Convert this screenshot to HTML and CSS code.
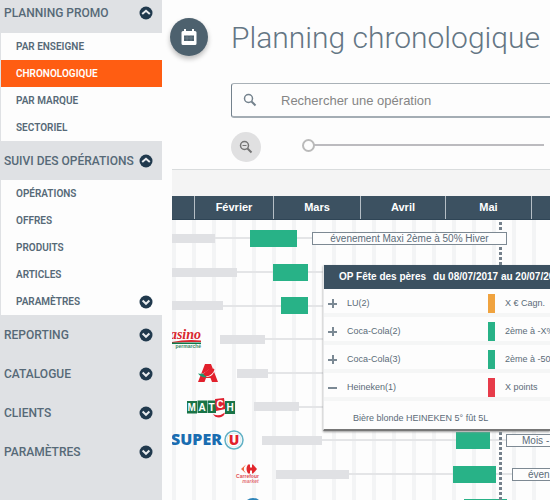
FILE: index.html
```html
<!DOCTYPE html>
<html lang="fr">
<head>
    <meta charset="UTF-8">
    <title>Planning chronologique</title>
    <link rel="stylesheet" href="styles.css">
</head>
<body>
<svg width="0" height="0" class="defs">
    <symbol id="down" viewBox="0 0 14 14">
        <circle cx="7" cy="7" r="6.5" fill="#20394d"/>
        <path d="M3.6 5.6L7 8.8l3.4-3.2" fill="none" stroke="#e8ebee" stroke-width="2"/>
    </symbol>
    <symbol id="up" viewBox="0 0 14 14">
        <circle cx="7" cy="7" r="6.5" fill="#20394d"/>
        <path d="M3.2 8L7 4.8 10.8 8" fill="none" stroke="#e8ebee" stroke-width="2"/>
    </symbol>
</svg>
<div id="container">
    <nav id="menu">
        <button class="head first">PLANNING PROMO<svg><use href="#up"/></svg></button>
        <ul>
            <li><a href="#">PAR ENSEIGNE</a></li>
            <li class="selected"><a href="#">CHRONOLOGIQUE</a></li>
            <li><a href="#">PAR MARQUE</a></li>
            <li><a href="#">SECTORIEL</a></li>
        </ul>
        <button class="head">SUIVI DES OPÉRATIONS<svg><use href="#up"/></svg></button>
        <ul>
            <li><a href="#">OPÉRATIONS</a></li>
            <li><a href="#">OFFRES</a></li>
            <li><a href="#">PRODUITS</a></li>
            <li><a href="#">ARTICLES</a></li>
            <li><a href="#">PARAMÈTRES<svg><use href="#down"/></svg></a></li>
        </ul>
        <button class="head">REPORTING<svg><use href="#down"/></svg></button>
        <button class="head">CATALOGUE<svg><use href="#down"/></svg></button>
        <button class="head">CLIENTS<svg><use href="#down"/></svg></button>
        <button class="head">PARAMÈTRES<svg><use href="#down"/></svg></button>
    </nav>

    <main id="content">
        <header id="title">
            <span class="round">
                <svg width="16" height="18" viewBox="0 0 16 18">
                    <path d="M3 1h2v2h6V1h2v2h1q1.500 0 1.500 1.500v11q0 1.500-1.500 1.500H2Q.5 17 .5 15.500v-11Q.5 3 2 3h1z" fill="#fff"/>
                    <path d="M3 7.500h10v5.500H3z" fill="#4d616e"/>
                    <path d="M3 10h10M6 7.500v5.500M10 7.500v5.500" stroke="#7b8a94" stroke-width=".6"/>
                </svg>
            </span>
            <h1>Planning chronologique</h1>
        </header>

        <div id="tools">
            <div id="search">
                <svg width="14" height="14" viewBox="0 0 14 14" fill="none" stroke="#74828d">
                    <circle cx="5.500" cy="5.500" r="4" stroke-width="1.500"/>
                    <path d="M8.500 8.500l4 4" stroke-width="2"/>
                </svg>
                <input type="text" aria-label="Rechercher une opération" placeholder="Rechercher une opération">
            </div>
            <div id="zoom">
                <button aria-label="Zoom arrière">
                    <svg width="14" height="14" viewBox="0 0 14 14" fill="none" stroke="#747474">
                        <circle cx="5.500" cy="5.500" r="4" stroke-width="1.500"/>
                        <path d="M8.500 8.500l4 4" stroke-width="2"/>
                        <path d="M3.500 5.500h4"/>
                    </svg>
                </button>
                <input type="range" aria-label="Zoom" min="0" max="10" value="0">
            </div>
        </div>

        <section id="chart">
            <div id="band"></div>
            <div id="months">
                <span></span><span>Février</span><span>Mars</span><span>Avril</span><span>Mai</span><span></span>
            </div>
            <div id="rows">
                <div id="today"></div>
                <div class="row">
                    <i class="grey" style="width:43px"></i><i class="line" style="width:35px"></i>
                    <i class="green" style="width:47px"></i><i class="line" style="width:15px"></i>
                    <span class="tag" style="width:195px">évenement Maxi 2ème à 50% Hiver</span>
                </div>
                <div class="row">
                    <i class="grey" style="width:65px"></i><i class="line" style="width:36px"></i>
                    <i class="green" style="width:35px"></i><i class="line" style="width:18px"></i>
                </div>
                <div class="row">
                    <i class="grey" style="width:51px"></i><i class="line" style="width:58px"></i>
                    <i class="green" style="width:27px"></i><i class="line" style="width:18px"></i>
                </div>
                <div class="row">
                    <span class="logo" style="width:48px">
                        <svg width="30" height="20" viewBox="0 0 30 20">
                            <text x="29" y="10" text-anchor="end" class="casino">asino</text>
                            <path d="M0 13Q14 10 29 11.500v1.500Q14 12.500 0 14z" fill="#d9262f"/>
                            <path d="M0 13.500h29v1.500H0z" fill="#0d7a4a"/>
                            <text x="29" y="19" text-anchor="end" class="sub">permarché</text>
                        </svg>
                    </span>
                    <i class="grey" style="width:45px"></i><i class="line" style="width:60px"></i>
                </div>
                <div class="row">
                    <span class="logo" style="width:65px">
                        <svg width="46" height="20" viewBox="0 0 46 20">
                            <path d="M33 1h6l7 18h-6l-1.500-4H34l-1.500 4H26z" fill="#e2202c"/>
                            <path d="M26 11.500q6-.5 10-4.500 4-3 7-1-1 7-8 8-4 .5-6-2.500z" fill="#fff"/>
                            <path d="M26 10.500q5 1 9-1l-1 5q-5 0-8-4z" fill="#1b9a6c"/>
                            <path d="M31 11l7-6q3.500-.5 4.500 1.500Q41 12.500 34 13.500z" fill="#e2202c"/>
                        </svg>
                    </span>
                    <i class="grey" style="width:31px"></i><i class="line" style="width:56px"></i>
                </div>
                <div class="row">
                    <span class="logo" style="width:82px">
                        <svg width="64" height="22" viewBox="0 0 64 22">
                            <path d="M15 5h10v12.500H15zM25.500 4.500h9.500v12.500h-9.500zM35.500 4.500h8.500v12.500h-8.500zM53 5h10v13H53z" fill="#197447"/>
                            <path d="M43 3l9-1 1.500 11-9.500 2z" fill="#df2231"/>
                            <path d="M41 18q6 3 12-1.500-1 4.500-6 5-4 0-6-3.500z" fill="#df2231"/>
                            <g class="match"><text x="15.500" y="15">M</text><text x="26.500" y="15">A</text><text x="36.500" y="15">T</text><text x="44.500" y="12">C</text><text x="54.500" y="15">H</text></g>
                        </svg>
                    </span>
                    <i class="grey" style="width:45px"></i><i class="line" style="width:25px"></i>
                </div>
                <div class="row">
                    <span class="logo" style="width:90px">
                        <svg width="72" height="20" viewBox="0 0 72 20">
                            <text x="50" y="15" text-anchor="end" class="super">SUPER</text>
                            <circle cx="62" cy="10" r="9" fill="#fff" stroke="#62b1c5" stroke-width="1.500"/>
                            <circle cx="62" cy="10" r="7" fill="#fff" stroke="#d9eaf0" stroke-width="1"/>
                            <text x="62" y="15" text-anchor="middle" class="u">U</text>
                        </svg>
                    </span>
                    <i class="grey" style="width:60px"></i><i class="line" style="width:134px"></i>
                    <i class="green" style="width:34px"></i><i class="line" style="width:16px"></i>
                    <span class="tag open">Mois -</span>
                </div>
                <div class="row">
                    <span class="logo" style="width:104px">
                        <svg width="88" height="20" viewBox="0 0 88 20">
                            <path d="M74 .5l-5 4.500 5 4.500-2-3V3.500z" fill="#ef6a43"/>
                            <path d="M76 .5h2v3h2v-3h1l4 4.500-4 4.500h-1v-3h-2v3h-2q-3-4.500 0-9z" fill="#e2262c"/>
                            <text x="75.500" y="14" text-anchor="middle" class="carrefour">Carrefour</text>
                            <text x="78.500" y="19" text-anchor="middle" class="market">market</text>
                        </svg>
                    </span>
                    <i class="grey" style="width:73px"></i><i class="line" style="width:104px"></i>
                    <i class="green" style="width:43px"></i><i class="line" style="width:16px"></i>
                    <span class="tag open">éven</span>
                </div>
                <div class="row">
                    <span class="logo" style="width:118px">
                        <svg width="90" height="20" viewBox="0 0 90 20"><circle cx="81" cy="10" r="10" fill="#2c83b8"/></svg>
                    </span>
                    <i class="line" style="width:174px"></i><i class="green" style="width:43px"></i>
                </div>

                <div id="popup">
                    <h2><b>OP Fête des pères</b><span>du 08/07/2017 au 20/07/2017</span></h2>
                    <div class="offer">
                        <button aria-label="Ouvrir" class="plus"></button><span>LU(2)</span><i class="orange"></i><span>X € Cagn.</span>
                    </div>
                    <div class="offer">
                        <button aria-label="Ouvrir" class="plus"></button><span>Coca-Cola(2)</span><i></i><span>2ème à -X%</span>
                    </div>
                    <div class="offer">
                        <button aria-label="Ouvrir" class="plus"></button><span>Coca-Cola(3)</span><i></i><span>2ème à -50%</span>
                    </div>
                    <div class="offer">
                        <button aria-label="Fermer" class="minus"></button><span>Heineken(1)</span><i class="red"></i><span>X points</span>
                    </div>
                    <p>Bière blonde HEINEKEN 5° fût 5L</p>
                </div>
            </div>
        </section>
    </main>
</div>
</body>
</html>
```

FILE: styles.css
```css
*{
    margin: 0;
    padding: 0;
    box-sizing: border-box;
}
ul{
    list-style: none;
}
button{
    border: 0;
    background: none;
    font: inherit;
    color: inherit;
    cursor: pointer;
}
body{
    height: 100vh;
    overflow: hidden;
    background: #fdfdfd;
    color: #5b6b78;
    font-family: "Liberation Sans", sans-serif;
}
.defs{
    position: absolute;
}
#container{
    display: flex;
    min-height: 100vh;
}

/* menu */
#menu{
    flex: none;
    width: 162px;
    background: #dfe1e4;
    font-family: Roboto, sans-serif;
    font-weight: 500;
    color: #566977;
}
#menu svg{
    flex: none;
    width: 14px;
    height: 14px;
}
.head{
    display: flex;
    justify-content: space-between;
    align-items: center;
    width: 100%;
    height: 39px;
    padding: 0 9px 0 4px;
    font-size: 12px;
    white-space: nowrap;
}
.head.first{
    height: 33px;
    padding-bottom: 7px;
}
#menu ul{
    margin-left: 1px;
    background: #fdfdfd;
}
#menu li a{
    display: flex;
    justify-content: space-between;
    align-items: center;
    height: 27px;
    padding: 0 9px 0 15px;
    font-size: 10px;
    font-weight: 600;
    color: inherit;
    text-decoration: none;
}
#menu .selected{
    background: #ff5d12;
    color: #fff;
}

/* title and tools */
#content{
    flex: 1;
    min-width: 0;
    overflow: hidden;
    padding-left: 8px;
}
#title{
    display: flex;
    align-items: center;
    gap: 23px;
    height: 74px;
}
.round{
    display: flex;
    flex: none;
    align-items: center;
    justify-content: center;
    width: 38px;
    height: 38px;
    border-radius: 50%;
    background: #4d616e;
    box-shadow: 0 3px 5px #bbb;
}
h1{
    font: 300 30px Roboto, sans-serif;
    color: #647684;
    white-space: nowrap;
}
#tools{
    padding: 9px 0 0 61px;
}
#search{
    display: flex;
    align-items: center;
    height: 35px;
    padding-left: 11px;
    border: 1px solid #a9b1b7;
    border-right: 0;
    border-bottom: 2px solid #a4adb4;
    border-left-color: #74828d;
    border-radius: 3px 0 0 3px;
}
#search input{
    flex: 1;
    min-width: 0;
    padding-left: 24px;
    border: 0;
    outline: 0;
    background: none;
    font: 13px "Liberation Sans", sans-serif;
}
#search input::placeholder{
    color: #858585;
}
#zoom{
    display: flex;
    align-items: center;
    gap: 41px;
    height: 51px;
    padding: 0 6px 0 0;
}
#zoom button{
    display: flex;
    flex: none;
    align-items: center;
    justify-content: center;
    width: 30px;
    height: 30px;
    margin-top: 6px;
    border-radius: 50%;
    background: #e0e0e1;
}
#zoom input{
    flex: 1;
    min-width: 0;
    height: 14px;
    margin-top: 3px;
    appearance: none;
    background: linear-gradient(#bcbbbf, #bcbbbf) 7px center / 100% 2px no-repeat;
}
#zoom input::-webkit-slider-thumb{
    appearance: none;
    width: 13px;
    height: 13px;
    border: 2px solid #bababa;
    border-radius: 50%;
    background: #fdfdfd;
}

/* chart */
#chart{
    margin-left: 2px;
}
#band{
    height: 27px;
    border-top: 1px solid #d9dcdd;
    background: #f4f4f4;
}
#months{
    display: grid;
    grid-template-columns: 22px 78px 86px 84px 85px 1fr;
    gap: 1px;
    height: 24px;
    background: #b5bec5;
    border-bottom: 1px solid #2f4556;
}
#months span{
    background: #3c5161;
    color: #fff;
    font-size: 11px;
    font-weight: bold;
    line-height: 23px;
    text-align: center;
}
#rows{
    position: relative;
    display: grid;
    grid-auto-rows: 34px 34px 33px;
    padding-top: 1px;
    background: repeating-linear-gradient(90deg, #f3f4f5 0, #f3f4f5 4px, #fdfdfd 4px, #fdfdfd 20px);
}
.row{
    display: flex;
    align-items: center;
    overflow: hidden;
}
.row > *{
    flex: none;
}
.grey{
    height: 9px;
    background: #e0e1e4;
}
.line{
    height: 2px;
    background: #e4e5e7;
}
.green{
    height: 17px;
    background: #28b287;
}
.tag{
    height: 13px;
    border: 1px solid #7d8993;
    background: #fdfdfd;
    font-size: 10px;
    line-height: 11px;
    text-align: center;
    white-space: nowrap;
    z-index: 1;
}
.row .open{
    flex: 1 0 0;
    min-width: 0;
    padding-left: 15px;
    border-right: 0;
    text-align: left;
}
.logo{
    display: flex;
}
.casino{
    font: italic bold 14px "Liberation Serif", serif;
    fill: #d9262f;
}
.sub{
    font: bold 5px "Liberation Sans", sans-serif;
    fill: #3b8a68;
}
.match{
    font: bold 10px "Liberation Sans", sans-serif;
    fill: #fff;
}
.super{
    font: 800 16px "Open Sans", sans-serif;
    fill: #1a6db1;
}
.u{
    font: 800 14px "Open Sans", sans-serif;
    fill: #e2202c;
}
.carrefour{
    font: bold 5px "Liberation Sans", sans-serif;
    fill: #df4d55;
}
.market{
    font: italic bold 5px "Liberation Sans", sans-serif;
    fill: #e3747b;
}
#today{
    position: absolute;
    top: 2px;
    bottom: 0;
    left: 327px;
    width: 3px;
    background: repeating-linear-gradient(#74808b 0, #74808b 3px, transparent 3px, transparent 5px);
}

/* offers of the operation */
#popup{
    position: absolute;
    top: 45px;
    left: 151px;
    right: 0;
    overflow: hidden;
    background: #fdfdfd;
    border-left: 1px solid #e8e9ea;
    border-bottom: 2px solid #777;
    box-shadow: 0 1px 2px #999;
    font-size: 9px;
    white-space: nowrap;
    z-index: 2;
}
#popup h2{
    display: flex;
    gap: 7px;
    height: 24px;
    padding-left: 15px;
    background: #3c5161;
    color: #fff;
    font-size: 10px;
    line-height: 24px;
}
.offer{
    display: grid;
    grid-template-columns: 9px 131px 7px 1fr;
    column-gap: 10px;
    align-items: center;
    height: 28px;
    padding-left: 4px;
    border-bottom: 4px solid #f5f6f6;
    border-top: 4px solid #fdfdfd;
}
.offer i{
    height: 19px;
    background: #28b287;
}
.offer .orange{
    background: #f0a33f;
}
.offer .red{
    background: #e73c4a;
}
.plus, .minus{
    width: 9px;
    height: 9px;
    background: linear-gradient(#7b8994, #7b8994) 0 4px / 9px 2px no-repeat;
}
.plus{
    background: linear-gradient(#7b8994, #7b8994) 0 4px / 9px 2px no-repeat, linear-gradient(#7b8994, #7b8994) 4px 0 / 2px 9px no-repeat;
}
#popup p{
    height: 28px;
    padding-left: 29px;
    line-height: 34px;
}
```
